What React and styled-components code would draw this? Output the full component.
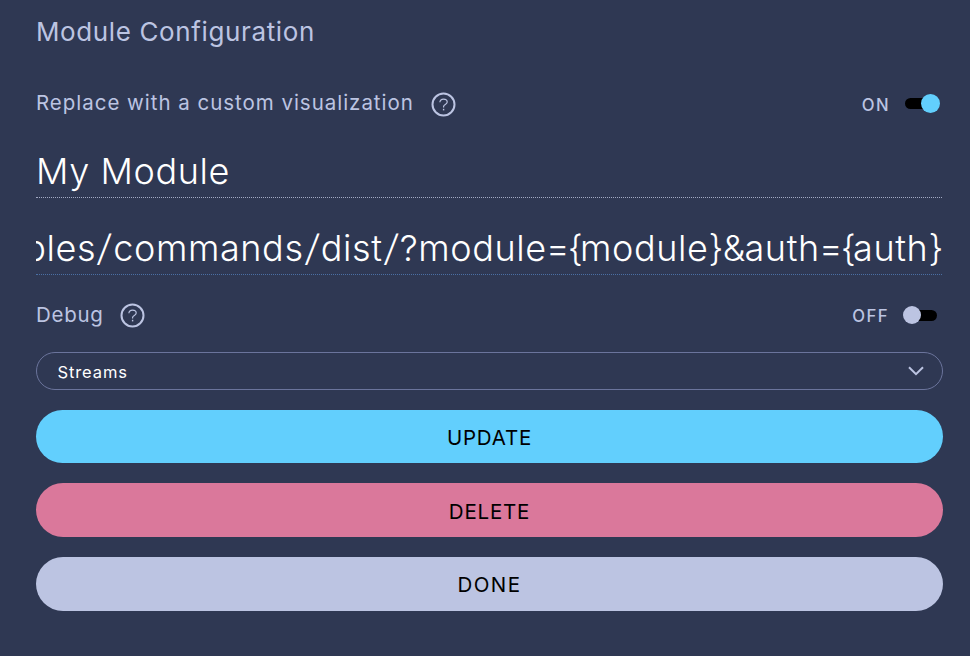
import React, { useState } from 'react';
import styled, { createGlobalStyle, ThemeProvider } from 'styled-components';

const theme = {
  background: '#2f3853',
  text: '#bcc4e2',
  white: '#ffffff',
  black: '#000000',
  blue: '#62cffd',
  pink: '#da789b',
  outline: '#6b749c',
};

const GlobalStyle = createGlobalStyle`
  * {
    box-sizing: border-box;
  }
  body {
    margin: 0;
    background: ${theme.background};
    font-family: Inter, 'Liberation Sans', sans-serif;
  }
`;

const Panel = styled.main`
  display: flex;
  flex-direction: column;
  height: 656px;
  padding: 0 27px 0 36px;
  overflow: hidden;
  color: ${({ theme }) => theme.text};
`;

const Title = styled.h1`
  margin: 16px 0 0;
  font-size: 26px;
  font-weight: 400;
  line-height: 32px;
  letter-spacing: 0.62px;
  white-space: nowrap;
`;

const Row = styled.div`
  display: flex;
  align-items: center;
  height: 26px;
  margin-top: ${({ $top }) => $top}px;
`;

const Label = styled.span`
  margin-right: ${({ $gap }) => $gap}px;
  font-size: 20.5px;
  line-height: 26px;
  letter-spacing: ${({ $spacing }) => $spacing}px;
  white-space: nowrap;
`;

const Help = styled.svg`
  position: relative;
  top: ${({ $drop }) => $drop}px;
  width: 25px;
  height: 25px;
  fill: none;
  stroke: currentColor;
`;

const State = styled.span`
  margin-left: auto;
  margin-right: ${({ $on }) => ($on ? 15 : 14)}px;
  padding-top: ${({ $on }) => ($on ? 3 : 2)}px;
  font-size: 16.7px;
  font-weight: 500;
  line-height: 26px;
  letter-spacing: 1.4px;
`;

const Switch = styled.button`
  display: flex;
  align-items: center;
  justify-content: ${({ $on }) => ($on ? 'flex-end' : 'flex-start')};
  width: ${({ $on }) => ($on ? 35 : 34)}px;
  height: 11px;
  margin-right: ${({ $on }) => ($on ? 3 : 6)}px;
  padding: 0;
  border: 0;
  background: linear-gradient(${({ theme }) => `${theme.black}, ${theme.black}`})
    ${({ $on }) => ($on ? 'left' : 'right')} / 32px 11px no-repeat;
  border-radius: 6px;
`;

const Knob = styled.span`
  flex: none;
  width: ${({ $on }) => ($on ? 19 : 18)}px;
  height: ${({ $on }) => ($on ? 19 : 18)}px;
  border-radius: 50%;
  background: ${({ theme, $on }) => ($on ? theme.blue : theme.text)};
`;

const Field = styled.div`
  display: flex;
  justify-content: ${({ $scrolled }) => ($scrolled ? 'flex-end' : 'flex-start')};
  height: 52px;
  margin-top: ${({ $top }) => $top}px;
  margin-right: 1px;
  overflow: hidden;
  border-bottom: 1px dotted ${({ $line }) => $line};
  color: ${({ theme }) => theme.white};
  font-size: 36px;
  font-weight: 300;
  line-height: 50px;
  letter-spacing: 0.6px;
  white-space: nowrap;
`;

const Url = styled.span`
  flex: none;
  margin-right: -2px;
`;

const Sign = styled.span`
  display: inline-block;
  margin: 0 ${({ $gap }) => $gap}px;
  letter-spacing: ${({ $spacing }) => $spacing}px;
  transform: skewX(${({ $slant }) => $slant || 0}deg);
`;

const Select = styled.button`
  display: flex;
  align-items: center;
  justify-content: space-between;
  height: 38px;
  margin-top: 24px;
  padding: 2px 18px 0 20.5px;
  border: 1px solid ${({ theme }) => theme.outline};
  border-radius: 19px;
  background: none;
  color: ${({ theme }) => theme.white};
  font: 400 16.5px Inter, 'Liberation Sans', sans-serif;
  letter-spacing: 0.9px;
`;

const Chevron = styled.svg`
  width: 16px;
  height: 10px;
  margin-top: -3px;
  fill: none;
  stroke: ${({ theme }) => theme.text};
  stroke-width: 2;
`;

const Button = styled.button`
  flex: none;
  height: ${({ $height }) => $height || 54}px;
  margin-top: 20px;
  padding: ${({ $lift }) => ($lift ? 0 : 2)}px 0 0;
  border: 0;
  border-radius: 27px;
  background: ${({ theme, $color }) => theme[$color]};
  color: ${({ theme }) => theme.black};
  font: 400 20.5px Inter, 'Liberation Sans', sans-serif;
  letter-spacing: ${({ $spacing }) => $spacing}px;
`;

const signs = {
  '/': { $gap: 2, $spacing: 0.6, $slant: -7 },
  '={': { $gap: -0.8, $spacing: -1.8 },
  '}&': { $gap: -0.2, $spacing: -0.6 },
};

const template = 'ples/commands/dist/?module={module}&auth={auth}';

const HelpIcon = ({ drop }) => (
  <Help viewBox="0 0 25 25" $drop={drop}>
    <circle cx="12.5" cy="12.5" r="11" strokeWidth="2" />
    <path d="M8.9 10.3c0-2 1.5-3.2 3.6-3.2s3.7 1.2 3.7 3c0 2.5-3.6 2.3-3.6 4.5v.8" strokeWidth="1.2" />
    <path d="M12.6 16.8v1.6" strokeWidth="1.4" />
  </Help>
);

const Toggle = ({ on, onChange }) => (
  <>
    <State $on={on}>{on ? 'ON' : 'OFF'}</State>
    <Switch $on={on} role="switch" aria-checked={on} onClick={() => onChange(!on)}>
      <Knob $on={on} />
    </Switch>
  </>
);

const App = () => {
  const [custom, setCustom] = useState(true);
  const [debug, setDebug] = useState(false);

  return (
    <ThemeProvider theme={theme}>
      <GlobalStyle />
      <Panel>
        <Title>Module Configuration</Title>
        <Row $top={42}>
          <Label $gap={17} $spacing={0.97}>
            Replace with a custom visualization
          </Label>
          <HelpIcon drop={1.7} />
          <Toggle on={custom} onChange={setCustom} />
        </Row>
        <Field $top={30} $line="#a3aac4">
          My Module
        </Field>
        <Field $top={25} $line="#4a6fa3" $scrolled>
          <Url>
            {template.split(/(\/|=\{|\}&)/).map((part, i) =>
              signs[part] ? (
                <Sign key={i} {...signs[part]}>
                  {part}
                </Sign>
              ) : (
                part
              )
            )}
          </Url>
        </Field>
        <Row $top={27}>
          <Label $gap={16.5} $spacing={0.7}>
            Debug
          </Label>
          <HelpIcon drop={0.7} />
          <Toggle on={debug} onChange={setDebug} />
        </Row>
        <Select>
          Streams
          <Chevron viewBox="0 0 16 10">
            <path d="M1 1.2l7 7 7-7" />
          </Chevron>
        </Select>
        <Button $color="blue" $height={53} $spacing={0.8}>
          UPDATE
        </Button>
        <Button $color="pink" $spacing={0.8}>
          DELETE
        </Button>
        <Button $color="text" $spacing={1.4} $lift>
          DONE
        </Button>
      </Panel>
    </ThemeProvider>
  );
};

export default App;
